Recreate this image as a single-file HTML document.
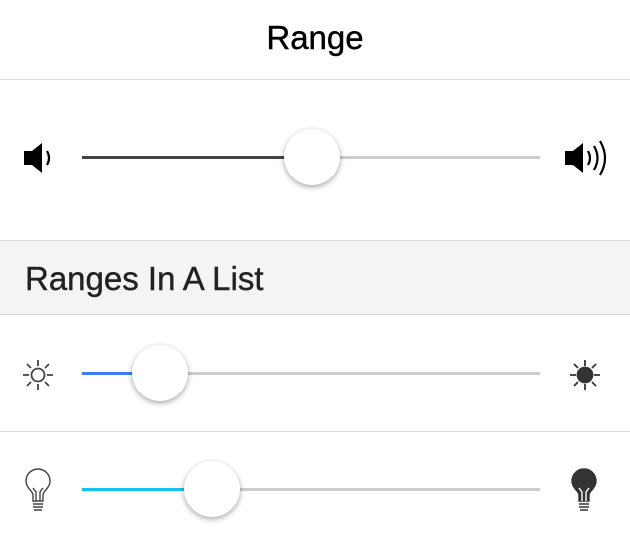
<!DOCTYPE html>
<html><head><style>
body{margin:0;width:630px;height:540px;background:#fff;font-family:"Liberation Sans",sans-serif;position:relative;overflow:hidden}
.hdr{position:absolute;top:0;left:0;width:630px;height:79px;border-bottom:1px solid #ddd;text-align:center;line-height:76px;font-size:33px;color:#000;-webkit-text-stroke:0.4px #000}
.ln{position:absolute;left:0;width:630px;height:1px;background:#d9d9d9}
.lh{position:absolute;top:241px;left:0;width:630px;height:73px;background:#f4f4f4;font-size:33px;line-height:76px;padding-left:25px;box-sizing:border-box;color:#222;-webkit-text-stroke:0.4px #222}
.tr{position:absolute;left:82px;width:458px;height:3px;background:#ccc}
.fill{position:absolute;left:0;top:0;height:3px}
.knob{position:absolute;width:56px;height:56px;border-radius:50%;background:#fff;box-shadow:0 2px 6px rgba(0,0,0,.35);top:-27px;margin-left:-28px}
svg{position:absolute}
</style></head><body>
<div class="hdr">Range</div>
<div class="ln" style="top:240px"></div>
<div class="lh">Ranges In A List</div>
<div class="ln" style="top:314px"></div>
<div class="ln" style="top:431px"></div>

<div class="tr" style="top:156px"><div class="fill" style="width:230px;background:#444"></div><div class="knob" style="left:230px"></div></div>
<div class="tr" style="top:372px"><div class="fill" style="width:78px;background:#387ef5"></div><div class="knob" style="left:78px"></div></div>
<div class="tr" style="top:488px"><div class="fill" style="width:130px;background:#11c1f3"></div><div class="knob" style="left:130px"></div></div>

<svg style="left:20px;top:140px" width="40" height="36" viewBox="0 0 40 36">
<path d="M4 11h8l10-8v30l-10-8H4z" fill="#000"/>
<path d="M27 11q4 7 0 14" stroke="#000" stroke-width="2.2" fill="none"/>
</svg>
<svg style="left:560px;top:138px" width="50" height="40" viewBox="0 0 50 40">
<path d="M5 13h8l10-8v30l-10-8H5z" fill="#000"/>
<path d="M28 13q4 7 0 14M34 8q7 12 0 24M40 3q10 17 0 34" stroke="#000" stroke-width="2.2" fill="none"/>
</svg>

<svg style="left:22px;top:359px" width="32" height="32" viewBox="0 0 32 32" stroke="#444" stroke-width="1.8" fill="none">
<circle cx="16" cy="16" r="6.5"/>
<path d="M16 1v6M16 25v6M1 16h6M25 16h6M5 5l4 4M23 23l4 4M27 5l-4 4M9 23l-4 4"/>
</svg>
<svg style="left:569px;top:359px" width="32" height="32" viewBox="0 0 32 32" stroke="#333" stroke-width="1.8">
<circle cx="16" cy="16" r="7.5" fill="#333"/>
<path d="M16 1v6M16 25v6M1 16h6M25 16h6M5 5l4 4M23 23l4 4M27 5l-4 4M9 23l-4 4"/>
</svg>

<svg style="left:22px;top:468px" width="32" height="46" viewBox="0 0 32 46" stroke="#444" stroke-width="1.4" fill="none">
<path d="M11 33v-6c0-4-7-7-7-14a12 12 0 0 1 24 0c0 7-7 10-7 14v6z"/>
<path d="M14 33v-9l-3-4M18 33v-9l3-4"/>
<path d="M11 36h10M11 39h10M12 42h8"/>
</svg>
<svg style="left:568px;top:468px" width="32" height="46" viewBox="0 0 32 46" stroke="#333" stroke-width="1.4">
<path d="M11 33v-6c0-4-7-7-7-14a12 12 0 0 1 24 0c0 7-7 10-7 14v6z" fill="#333"/>
<path d="M14 33v-9l-3-4M18 33v-9l3-4" stroke="#fff" fill="none"/>
<path d="M11 36h10M11 39h10M12 42h8" fill="none"/>
</svg>
</body></html>
